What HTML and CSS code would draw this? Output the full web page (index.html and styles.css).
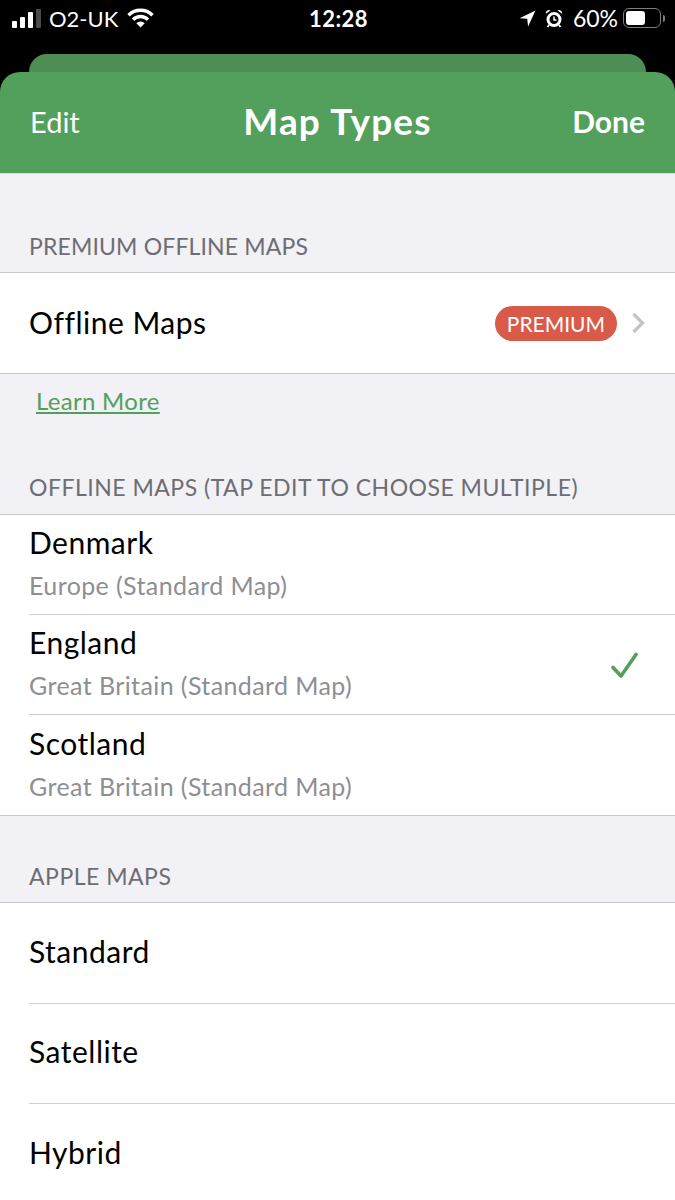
FILE: index.html
```html
<!DOCTYPE html>
<html lang="en">
<head>
  <meta charset="UTF-8" />
  <meta name="viewport" content="width=device-width, initial-scale=1" />
  <title>Map Types</title>
  <link rel="stylesheet" href="styles.css">
</head>
<body>
  <div class="phone">
    <div class="status-bar">
      <div class="status-left">
        <span class="signal"><i></i><i></i><i></i><i class="off"></i></span>
        <span>O2-UK</span>
        <svg class="wifi" width="27" height="20" viewBox="0 0 27 20">
          <path d="M1.500 7.200a17 17 0 0 1 24 0" fill="none" stroke="#fff" stroke-width="3.400"/>
          <path d="M6 11.600a10.700 10.700 0 0 1 15 0" fill="none" stroke="#fff" stroke-width="3.400"/>
          <path d="M9.300 15.200l4.200 4.300 4.200-4.300a6 6 0 0 0-8.400 0z" fill="#fff"/>
        </svg>
      </div>
      <div class="status-time">12:28</div>
      <div class="status-right">
        <svg class="arrow" width="17" height="17" viewBox="0 0 17 17"><path d="M16.500 .5L.5 8.200l7.700.6.9 7.700z" fill="#fff"/></svg>
        <svg class="alarm" width="18" height="19" viewBox="0 0 18 19">
          <circle cx="9" cy="10.500" r="6" fill="#000" stroke="#fff" stroke-width="3"/>
          <path d="M9 7.500v3.500h2.500" fill="none" stroke="#fff" stroke-width="1.500"/>
          <path d="M.8 4.800a3.200 3.200 0 0 1 4.700-3.300zM17.200 4.800a3.200 3.200 0 0 0-4.700-3.300z" fill="#fff"/>
          <path d="M4 16l-1.500 2M14 16l1.500 2" stroke="#fff" stroke-width="1.800"/>
        </svg>
        <span class="battery-pct">60%</span>
        <span class="battery"><span class="battery-fill"></span></span>
        <span class="battery-cap"></span>
      </div>
    </div>

    <div class="sheet-back"></div>
    <header class="nav">
      <span class="nav-edit">Edit</span>
      <h1>Map Types</h1>
      <span class="nav-done">Done</span>
    </header>

    <main class="content">
      <h2 class="section-title first">PREMIUM OFFLINE MAPS</h2>
      <div class="group">
        <div class="row">
          <span class="row-name">Offline Maps</span>
          <span class="badge">PREMIUM</span>
          <svg class="chevron" width="14" height="22" viewBox="0 0 14 22"><path d="M2.500 2l9 9-9 9" fill="none" stroke="#c4c4c7" stroke-width="3.200"/></svg>
        </div>
      </div>
      <a class="learn-more" href="#">Learn More</a>

      <h2 class="section-title offline">OFFLINE MAPS (TAP EDIT TO CHOOSE MULTIPLE)</h2>
      <div class="group">
        <div class="row double">
          <div class="row-text">
            <span class="row-name">Denmark</span>
            <span class="row-sub">Europe (Standard Map)</span>
          </div>
        </div>
        <div class="row double">
          <div class="row-text">
            <span class="row-name">England</span>
            <span class="row-sub">Great Britain (Standard Map)</span>
          </div>
          <svg class="check" width="30" height="30" viewBox="0 0 30 30"><path d="M3 15.500l8 8.500L26 2.500" fill="none" stroke="#53a05c" stroke-width="3.600" stroke-linecap="round" stroke-linejoin="round"/></svg>
        </div>
        <div class="row double">
          <div class="row-text">
            <span class="row-name">Scotland</span>
            <span class="row-sub">Great Britain (Standard Map)</span>
          </div>
        </div>
      </div>

      <h2 class="section-title apple">APPLE MAPS</h2>
      <div class="group">
        <div class="row tall"><span class="row-name">Standard</span></div>
        <div class="row tall"><span class="row-name">Satellite</span></div>
        <div class="row tall"><span class="row-name">Hybrid</span></div>
      </div>
    </main>
  </div>
</body>
</html>
```

FILE: styles.css
```css
* {
  box-sizing: border-box;
}
html, body {
  margin: 0;
  height: 100%;
}
body {
  background: #f1f1f6;
  font-family: 'Lato', 'Liberation Sans', sans-serif;
  color: #000;
  overflow: hidden;
}
.phone {
  height: 1200px;
  overflow: hidden;
  background: #000;
}

/* status bar */
.status-bar {
  height: 54px;
  padding: 0 10px 18px 12px;
  display: grid;
  grid-template-columns: 1fr auto 1fr;
  align-items: center;
  color: #fff;
  font-size: 22px;
}
.status-left {
  display: flex;
  align-items: center;
  gap: 8px;
}
.status-left .wifi {
  margin-left: 1px;
}
.signal {
  display: flex;
  align-items: flex-end;
  gap: 3px;
  height: 19px;
}
.signal i {
  display: block;
  width: 5px;
  border-radius: 1px;
  background: #fff;
}
.signal i:nth-child(1) { height: 7px; }
.signal i:nth-child(2) { height: 11px; }
.signal i:nth-child(3) { height: 16px; }
.signal i:nth-child(4) { height: 19px; }
.signal i.off {
  background: #4a4a4a;
}
.status-time {
  font-weight: 700;
  font-size: 22px;
  letter-spacing: 0.5px;
}
.status-right {
  display: flex;
  align-items: center;
  justify-content: flex-end;
}
.status-right .arrow {
  margin-right: 9px;
}
.status-right .alarm {
  margin-right: 10px;
}
.battery-pct {
  font-size: 23px;
}
.battery {
  display: block;
  width: 38px;
  height: 20px;
  margin-left: 5px;
  padding: 2px;
  border: 1.5px solid #7d7d7d;
  border-radius: 6px;
}
.battery-fill {
  display: block;
  width: 60%;
  height: 100%;
  background: #fff;
  border-radius: 3px;
}
.battery-cap {
  display: block;
  width: 2px;
  height: 7px;
  margin-left: 2px;
  background: #7d7d7d;
  border-radius: 0 2px 2px 0;
}

/* stacked sheets */
.sheet-back {
  height: 18px;
  margin: 0 29px 0 29px;
  background: #4e8d55;
  border-radius: 18px 18px 0 0;
}
.nav {
  height: 102px;
  padding: 0 30px 4px;
  display: grid;
  grid-template-columns: 1fr auto 1fr;
  align-items: center;
  background: #53a05c;
  border-radius: 20px 20px 0 0;
  border-bottom: 1px solid #d9dadc;
  color: #fff;
}
.nav h1 {
  margin: 0;
  font-size: 37px;
  font-weight: 700;
  letter-spacing: 1.2px;
}
.nav-edit {
  font-size: 29px;
  padding-top: 2px;
}
.nav-done {
  font-size: 30px;
  font-weight: 700;
  text-align: right;
}

/* list */
.content {
  height: 1027px;
  padding-top: 59px;
  background: #f1f1f6;
}
.section-title {
  margin: 0;
  padding: 0 29px;
  height: 39px;
  font-size: 23px;
  font-weight: 400;
  line-height: 26px;
  color: #6d6d72;
  letter-spacing: 0.5px;
}
.section-title.first {
  letter-spacing: 0.15px;
}
.section-title.offline {
  margin-top: 58px;
  height: 40px;
}
.section-title.apple {
  margin-top: 47px;
}
.group {
  background: #fff;
  border-top: 1px solid #c9c9cd;
  border-bottom: 1px solid #c9c9cd;
}
.row {
  height: 100px;
  margin-left: 29px;
  padding: 0 30px 3px 0;
  display: flex;
  align-items: center;
  border-bottom: 1px solid #cfcfd2;
}
.row.double {
  padding-bottom: 5px;
}
.row.tall {
  height: 100.5px;
  padding-bottom: 4px;
}
.row:last-child {
  border-bottom: none;
}
.row-name {
  font-size: 30px;
  letter-spacing: 0.5px;
  flex: 1;
}
.row-text {
  flex: 1;
  display: flex;
  flex-direction: column;
  gap: 10px;
}
.row-text .row-name {
  line-height: 36px;
}
.row-sub {
  font-size: 25px;
  line-height: 30px;
  color: #8e8e93;
  letter-spacing: 0.4px;
}
.badge {
  height: 35px;
  padding: 0 12px;
  margin: 3px 1px 0 0;
  display: flex;
  align-items: center;
  background: #d95a48;
  border-radius: 18px;
  color: #fff;
  font-size: 21px;
}
.chevron {
  margin: 3px 0 0 13px;
}
.check {
  margin: 9px 5px 0 0;
}
.learn-more {
  display: block;
  width: max-content;
  margin: 12px 0 0 36px;
  color: #53a05c;
  font-size: 24px;
  line-height: 30px;
  letter-spacing: 0.3px;
  text-decoration: underline;
}
```
